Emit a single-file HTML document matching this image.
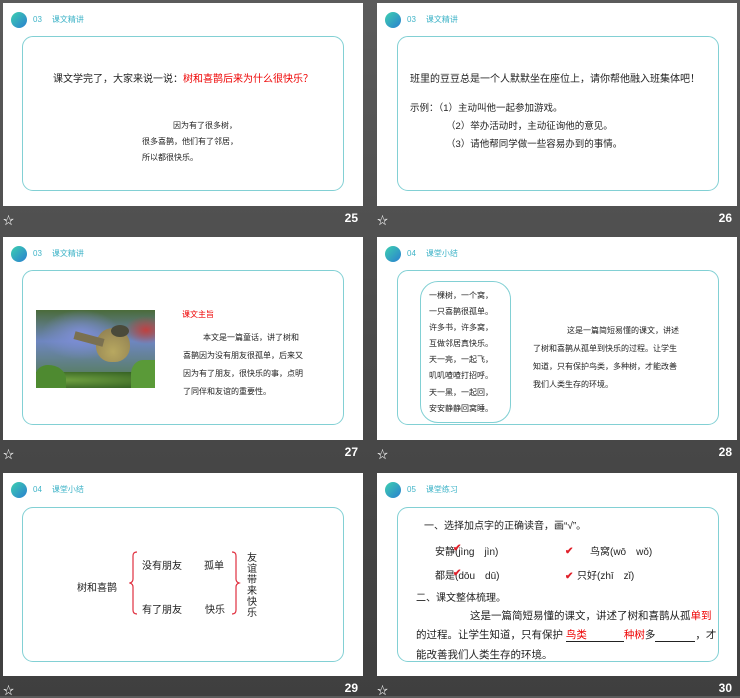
<!DOCTYPE html>
<html><head><meta charset="utf-8"><style>
*{margin:0;padding:0;box-sizing:border-box}
body{width:740px;height:696px;overflow:hidden;background:linear-gradient(#5b5b5b,#4a4a4a 50%,#3f3f3f);font-family:"Liberation Sans","Noto Sans CJK SC",sans-serif;position:relative}
.s{position:absolute;width:360px;height:203px;background:#fff}
.c{position:absolute;left:8px;top:9px;width:16px;height:16px;border-radius:50%;background:linear-gradient(135deg,#3dd0b0,#2a7fd0)}
.h{position:absolute;left:30px;top:11px;font-size:8px;color:#40b4c8;white-space:nowrap}
.h b{font-weight:normal;margin-left:10px}
.bx{position:absolute;left:19px;top:33px;width:322px;height:155px;border:1.5px solid #82d0d4;border-radius:11px}
.t{position:absolute;white-space:nowrap;color:#222}
.star{position:absolute;color:#fff;font-size:11px}
.n{position:absolute;color:#fff;font-size:12px;font-weight:bold;width:40px;text-align:right}
.r{color:#e00}
.ck{color:#e0202a;position:absolute;font-size:10px;font-weight:bold}
</style></head><body>

<!-- slide 25 -->
<div class="s" style="left:3px;top:3px">
<div class="c"></div><div class="h">03<b>课文精讲</b></div>
<div class="bx"></div>
<div class="t" style="left:50px;top:67px;font-size:10px">课文学完了，大家来说一说：<span class="r">树和喜鹊后来为什么很快乐？</span></div>
<div class="t" style="left:170px;top:117px;font-size:8px">因为有了很多树，</div>
<div class="t" style="left:139px;top:133px;font-size:8px">很多喜鹊，他们有了邻居，</div>
<div class="t" style="left:139px;top:149px;font-size:8px">所以都很快乐。</div>
</div>
<div class="star" style="left:3px;top:212px">☆</div><div class="n" style="left:318px;top:211px">25</div>

<!-- slide 26 -->
<div class="s" style="left:377px;top:3px">
<div class="c"></div><div class="h">03<b>课文精讲</b></div>
<div class="bx" style="left:20px"></div>
<div class="t" style="left:33px;top:67px;font-size:10px">班里的豆豆总是一个人默默坐在座位上，请你帮他融入班集体吧！</div>
<div class="t" style="left:33px;top:97px;font-size:9.5px">示例：（1）主动叫他一起参加游戏。</div>
<div class="t" style="left:69px;top:115px;font-size:9.5px">（2）举办活动时，主动征询他的意见。</div>
<div class="t" style="left:69px;top:133px;font-size:9.5px">（3）请他帮同学做一些容易办到的事情。</div>
</div>
<div class="star" style="left:377px;top:212px">☆</div><div class="n" style="left:692px;top:211px">26</div>

<!-- slide 27 -->
<div class="s" style="left:3px;top:237px">
<div class="c"></div><div class="h">03<b>课文精讲</b></div>
<div class="bx"></div>
<div style="position:absolute;left:33px;top:73px;width:119px;height:78px;overflow:hidden;background:radial-gradient(ellipse 40px 25px at 45px 25px,#7f8fd8,transparent),radial-gradient(ellipse 30px 20px at 110px 20px,#c04040,transparent 70%),linear-gradient(#4a6b3a,#6e86c0 40%,#507a40)">
<div style="position:absolute;left:60px;top:18px;width:34px;height:34px;border-radius:50% 50% 45% 45%;background:radial-gradient(circle at 50% 70%,#b8a860,#8a7a50)"></div>
<div style="position:absolute;left:75px;top:15px;width:18px;height:12px;border-radius:50%;background:#4a4a3a"></div>
<div style="position:absolute;left:38px;top:25px;width:30px;height:8px;background:#7a7050;transform:rotate(15deg)"></div>
<div style="position:absolute;left:0;top:62px;width:119px;height:16px;background:radial-gradient(ellipse at 20% 50%,#6fa040,#2e5a20)"></div>
<div style="position:absolute;left:0;top:55px;width:30px;height:23px;background:#4e8a30;border-radius:40% 60% 0 0"></div>
<div style="position:absolute;left:95px;top:50px;width:24px;height:28px;background:#5a9a38;border-radius:50% 0 0 0"></div>
</div>
<div class="t r" style="left:179px;top:72px;font-size:8px">课文主旨</div>
<div class="t" style="left:200px;top:92px;font-size:8px;line-height:18px">本文是一篇童话，讲了树和</div>
<div class="t" style="left:180px;top:110px;font-size:8px;line-height:18px">喜鹊因为没有朋友很孤单，后来又<br>因为有了朋友，很快乐的事，点明<br>了同伴和友谊的重要性。</div>
</div>
<div class="star" style="left:3px;top:446px">☆</div><div class="n" style="left:318px;top:445px">27</div>

<!-- slide 28 -->
<div class="s" style="left:377px;top:237px">
<div class="c"></div><div class="h">04<b>课堂小结</b></div>
<div class="bx" style="left:20px"></div>
<div style="position:absolute;left:43px;top:44px;width:91px;height:142px;border:1.5px solid #82d0d4;border-radius:18px"></div>
<div class="t" style="left:52px;top:51px;font-size:8px;line-height:16.1px">一棵树，一个窝，<br>一只喜鹊很孤单。<br>许多书，许多窝，<br>互做邻居真快乐。<br>天一亮，一起飞，<br>叽叽喳喳打招呼。<br>天一黑，一起回，<br>安安静静回窝睡。</div>
<div class="t" style="left:190px;top:85px;font-size:8px;line-height:18px">这是一篇简短易懂的课文，讲述</div>
<div class="t" style="left:156px;top:103px;font-size:8px;line-height:18px">了树和喜鹊从孤单到快乐的过程。让学生<br>知道，只有保护鸟类，多种树，才能改善<br>我们人类生存的环境。</div>
</div>
<div class="star" style="left:377px;top:446px">☆</div><div class="n" style="left:692px;top:445px">28</div>

<!-- slide 29 -->
<div class="s" style="left:3px;top:473px">
<div class="c"></div><div class="h">04<b>课堂小结</b></div>
<div class="bx" style="top:34px"></div>
<div class="t" style="left:74px;top:106px;font-size:10px">树和喜鹊</div>
<svg style="position:absolute;left:126px;top:78px" width="10" height="64"><path d="M8 1 Q4 1 4 5 L4 28 Q4 31 1 32 Q4 33 4 36 L4 59 Q4 63 8 63" fill="none" stroke="#e03040" stroke-width="1.2"/></svg>
<svg style="position:absolute;left:228px;top:78px" width="10" height="64"><path d="M1 1 Q5 1 5 5 L5 28 Q5 31 8 32 Q5 33 5 36 L5 59 Q5 63 1 63" fill="none" stroke="#e03040" stroke-width="1.2"/></svg>
<div class="t" style="left:139px;top:84px;font-size:10px">没有朋友</div>
<div class="t" style="left:201px;top:84px;font-size:10px">孤单</div>
<div class="t" style="left:139px;top:128px;font-size:10px">有了朋友</div>
<div class="t" style="left:202px;top:128px;font-size:10px">快乐</div>
<div class="t" style="left:244px;top:80px;font-size:10px;line-height:11px;width:12px;white-space:normal">友谊带来快乐</div>
</div>
<div class="star" style="left:3px;top:682px">☆</div><div class="n" style="left:318px;top:681px">29</div>

<!-- slide 30 -->
<div class="s" style="left:377px;top:473px">
<div class="c"></div><div class="h">05<b>课堂练习</b></div>
<div class="bx" style="left:20px;top:34px"></div>
<div class="t" style="left:47px;top:44px;font-size:10px">一、选择加点字的正确读音，画“√”。</div>
<div class="t" style="left:58px;top:70px;font-size:10px">安静(jìng　jìn)</div>
<div class="t" style="left:213px;top:70px;font-size:10px">鸟窝(wō　wǒ)</div>
<div class="t" style="left:58px;top:94px;font-size:10px">都是(dōu　dū)</div>
<div class="t" style="left:200px;top:94px;font-size:10px">只好(zhī　zǐ)</div>
<span class="ck" style="left:76px;top:70px">✔</span>
<span class="ck" style="left:188px;top:73px">✔</span>
<span class="ck" style="left:76px;top:95px">✔</span>
<span class="ck" style="left:188px;top:98px">✔</span>
<div class="t" style="left:39px;top:116px;font-size:10px">二、课文整体梳理。</div>
<div class="t" style="left:93px;top:135px;font-size:10.5px">这是一篇简短易懂的课文，讲述了树和喜鹊从孤<span class="r">单到</span></div>
<div class="t" style="left:39px;top:154px;font-size:10.5px">的过程。让学生知道，只有保护 <span class="r" style="display:inline-block;width:58px;border-bottom:1px solid #222;line-height:11px">鸟类</span><span class="r">种树</span>多<span style="display:inline-block;width:40px;border-bottom:1px solid #222;line-height:11px">&nbsp;</span>，才</div>
<div class="t" style="left:39px;top:174px;font-size:10.5px">能改善我们人类生存的环境。</div>
</div>
<div class="star" style="left:377px;top:682px">☆</div><div class="n" style="left:692px;top:681px">30</div>

</body></html>
